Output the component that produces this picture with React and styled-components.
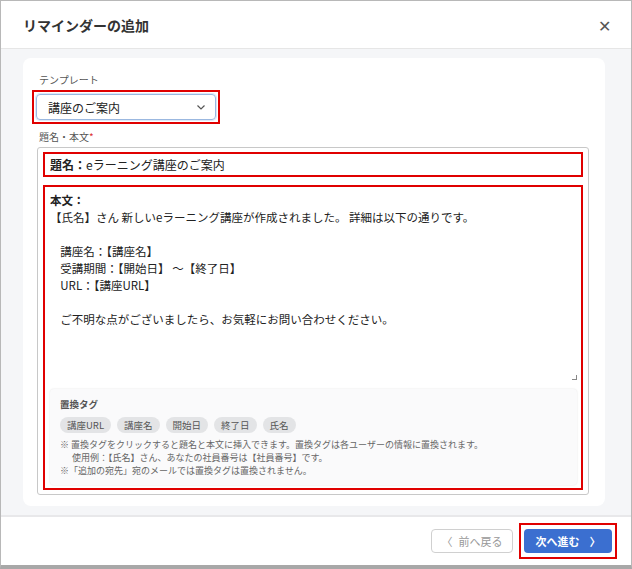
import React from "react";
import styled, { createGlobalStyle } from "styled-components";

const G = createGlobalStyle`
  body{margin:0;font-family:"Noto Sans CJK JP","Noto Sans",sans-serif;background:#fff;}
`;
const Win = styled.div`width:632px;height:569px;box-sizing:border-box;border:1px solid #b8b8b8;border-bottom:4px solid #a8a8a8;display:flex;flex-direction:column;background:#fff;`;
const Header = styled.div`height:47px;display:flex;align-items:center;justify-content:space-between;padding:0 20px 0 22px;border-bottom:1px solid #e6e6e6;`;
const Title = styled.div`font-size:14px;font-weight:700;color:#333;`;
const Close = styled.div`font-size:16px;color:#555;`;
const Body = styled.div`flex:1;background:#f5f6f8;padding:9px 26px 6px 22px;`;
const Card = styled.div`background:#fff;border-radius:8px;padding:14px 16px 16px 14px;height:448px;box-sizing:border-box;`;
const Label = styled.div`font-size:10px;color:#555;margin-bottom:3px;padding-left:2px;`;
const Req = styled.span`color:#d33;`;
const RedBox = styled.div`border:2px solid #e00000;padding:2px;`;
const SelectWrap = styled(RedBox)`width:180px;margin-left:-5px;margin-bottom:5px;`;
const Select = styled.div`height:24px;border:1px solid #9bb8e0;border-radius:4px;box-shadow:0 0 0 1px #dce8f8;display:flex;align-items:center;justify-content:space-between;padding:0 8px 0 11px;font-size:12px;color:#222;`;
const Editor = styled.div`border:1px solid #c8c8c8;border-radius:3px;height:348px;margin-top:1px;padding:4px 5px;box-sizing:border-box;display:flex;flex-direction:column;gap:8px;`;
const Subject = styled(RedBox)`padding:2px 5px;font-size:12px;color:#222;`;
const Main = styled(RedBox)`flex:1;display:flex;flex-direction:column;padding:5px 4px 3px 5px;position:relative;`;
const Text = styled.div`font-size:11.5px;line-height:17px;color:#222;white-space:pre;flex:1;`;
const Resize = styled.div`position:absolute;right:4px;top:188px;width:4px;height:4px;border-right:1px solid #888;border-bottom:1px solid #888;`;
const TagPanel = styled.div`background:#fafafb;border-radius:4px;box-shadow:0 0 2px rgba(0,0,0,.12);padding:8px 10px;`;
const TagTitle = styled.div`font-size:9.5px;color:#555;font-weight:700;margin-bottom:6px;`;
const Tags = styled.div`display:flex;gap:6px;margin-bottom:5px;`;
const Tag = styled.span`background:#e3e4e6;border-radius:8px;font-size:9.5px;color:#555;padding:1px 7px;`;
const Note = styled.div`font-size:9px;color:#666;line-height:13px;padding-left:${p=>p.$indent?"12px":"0"};`;
const Footer = styled.div`height:48px;border-top:2px solid #e8e8ea;display:flex;align-items:center;justify-content:flex-end;gap:6px;padding-right:14px;`;
const Back = styled.button`height:24px;width:82px;border:1px solid #d0d0d0;background:#fff;border-radius:4px;color:#999;font-size:11px;font-family:inherit;display:flex;align-items:center;justify-content:center;gap:6px;`;
const NextWrap = styled(RedBox)`padding:4px 3px;`;
const Next = styled.button`height:24px;width:88px;border:0;background:#3b6fd0;border-radius:4px;color:#fff;font-size:11px;font-weight:700;font-family:inherit;display:flex;align-items:center;justify-content:center;gap:10px;`;

const body = `【氏名】さん 新しいeラーニング講座が作成されました。 詳細は以下の通りです。

    講座名：【講座名】
    受講期間：【開始日】 ～【終了日】
    URL：【講座URL】

    ご不明な点がございましたら、お気軽にお問い合わせください。`;

export default function App(){
  return <>
    <G/>
    <Win>
      <Header><Title>リマインダーの追加</Title><Close>✕</Close></Header>
      <Body><Card>
        <Label>テンプレート</Label>
        <SelectWrap><Select>講座のご案内
          <svg width="12" height="12" viewBox="0 0 12 12"><path d="M2.5 4.5L6 8l3.5-3.5" fill="none" stroke="#555" strokeWidth="1.2"/></svg>
        </Select></SelectWrap>
        <Label>題名・本文<Req>*</Req></Label>
        <Editor>
          <Subject><b>題名：</b>eラーニング講座のご案内</Subject>
          <Main>
            <Text><b>本文：</b>{"\n"}{body}</Text>
            <Resize/>
            <TagPanel>
              <TagTitle>置換タグ</TagTitle>
              <Tags>{["講座URL","講座名","開始日","終了日","氏名"].map(t=><Tag key={t}>{t}</Tag>)}</Tags>
              <Note>※ 置換タグをクリックすると題名と本文に挿入できます。置換タグは各ユーザーの情報に置換されます。</Note>
              <Note $indent>使用例：【氏名】さん、あなたの社員番号は【社員番号】です。</Note>
              <Note>※「追加の宛先」宛のメールでは置換タグは置換されません。</Note>
            </TagPanel>
          </Main>
        </Editor>
      </Card></Body>
      <Footer>
        <Back><span>〈</span>前へ戻る</Back>
        <NextWrap><Next>次へ進む<span>〉</span></Next></NextWrap>
      </Footer>
    </Win>
  </>;
}
